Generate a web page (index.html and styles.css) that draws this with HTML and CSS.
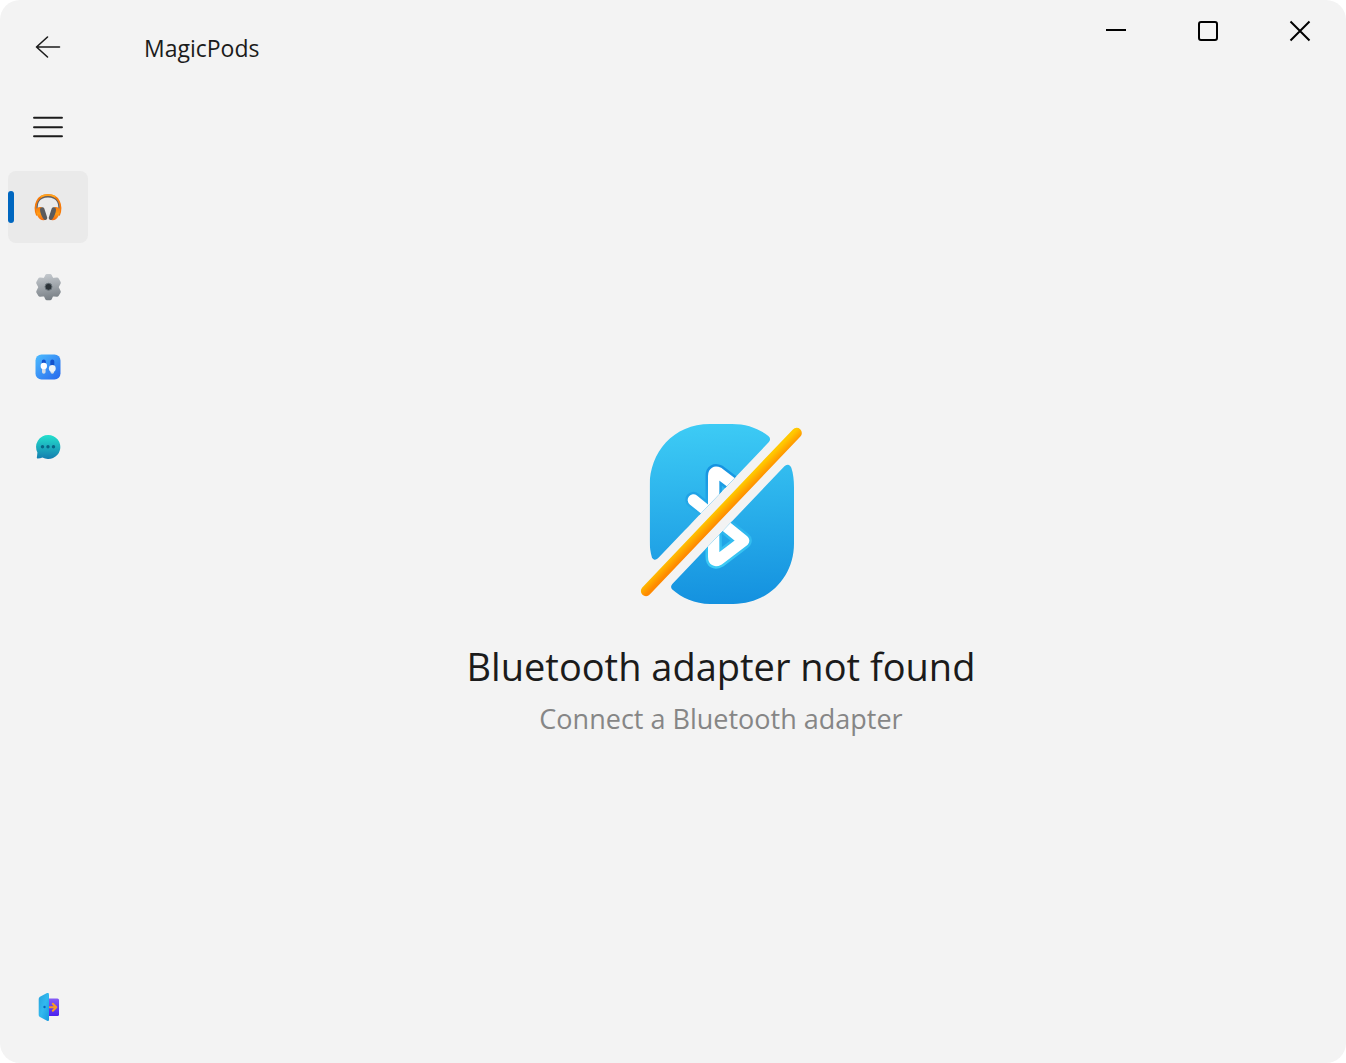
FILE: index.html
```html
<!DOCTYPE html>
<html lang="en">
<head>
<meta charset="utf-8">
<title>MagicPods</title>
<link rel="stylesheet" href="styles.css">
</head>
<body>
<div class="window">
  <nav class="sidebar" aria-label="Main">
    <button class="nav-button" type="button" aria-label="Back">
      <svg width="32" height="32" viewBox="0 0 32 32" fill="none" stroke="#1b1b1b" stroke-width="1.6" stroke-linecap="round" stroke-linejoin="round"><path d="M27.500 16H4.500M15.500 6L4.500 16L15.500 26"/></svg>
    </button>
    <button class="nav-button" type="button" aria-label="Menu">
      <svg width="32" height="32" viewBox="0 0 32 32" stroke="#1b1b1b" stroke-width="1.900" stroke-linecap="round"><path d="M2 6.700H30M2 16.200H30M2 25.200H30"/></svg>
    </button>
    <button class="nav-button selected" type="button" aria-label="Headphones" aria-current="page">
      <svg width="32" height="32" viewBox="0 0 32 32" fill="none">
        <defs><linearGradient id="cup" x1="0" y1="0" x2="0" y2="1"><stop stop-color="#f8790b"/><stop offset=".5" stop-color="#ff9c17"/><stop offset="1" stop-color="#f56a10"/></linearGradient></defs>
        <path d="M6.200 22C3 13.500 6 5.600 16 5.600S29 13.500 25.800 22" stroke="#606062" stroke-width="1.600"/>
        <path d="M5 24.500C1 14 5.500 4 16 4S31 14 27 24.500" stroke="#f77a08" stroke-width="1.800"/>
        <path d="M8.500 6C12 3.400 20 3.400 23.500 6" stroke="#ffa51f" stroke-width="1.600"/>
        <path d="M4.200 18.500C5.500 16 8 15.500 10 16.500L14.500 28.300C11 30.300 7.500 28.700 5.800 25.500C4.500 23 3.700 20.500 4.200 18.500ZM27.800 18.500C26.500 16 24 15.500 22 16.500L17.500 28.300C21 30.300 24.500 28.700 26.200 25.500C27.500 23 28.300 20.500 27.800 18.500Z" fill="url(#cup)"/>
        <path d="M8 18.500C8 15.800 11.500 15.600 12.300 17.500L15.200 26.500C15.600 28.600 12.800 29.800 11.500 28C9.800 25.500 8 21.500 8 18.500ZM24 18.500C24 15.800 20.500 15.600 19.700 17.500L16.800 26.500C16.400 28.600 19.200 29.800 20.500 28C22.200 25.500 24 21.500 24 18.500Z" fill="#5b5b5d"/>
      </svg>
    </button>
    <button class="nav-button" type="button" aria-label="Settings">
      <svg width="32" height="32" viewBox="0 0 32 32">
        <defs><linearGradient id="gear" gradientUnits="userSpaceOnUse" x1="14" y1="3" x2="18" y2="29"><stop stop-color="#c4c9ce"/><stop offset="1" stop-color="#777e84"/></linearGradient></defs>
        <path d="M15 5H18L19.800 9L25 8.600L26.800 11.700L24.500 16L26.800 20.800L25 23.800L19.800 23.200L18 27.300H15L13.200 23.200L8 23.800L6.200 20.800L8.500 16L6.200 11.700L8 8.600L13.200 9Z" fill="url(#gear)" stroke="url(#gear)" stroke-width="4" stroke-linejoin="round"/>
        <circle cx="16.500" cy="15.800" r="3.500" fill="#2b3237" stroke="#69737a"/>
      </svg>
    </button>
    <button class="nav-button" type="button" aria-label="Controls">
      <svg width="32" height="32" viewBox="0 0 32 32">
        <defs><linearGradient id="tile" x1="0" y1="0" x2="1" y2="1"><stop stop-color="#4cbcff"/><stop offset="1" stop-color="#2867ec"/></linearGradient></defs>
        <rect x="3.500" y="3.500" width="25" height="25" rx="6" fill="url(#tile)"/>
        <path d="M11.800 10.500V13M20.300 10.500V15" stroke="#1451cc" stroke-width="4" stroke-linecap="round"/>
        <path d="M11.800 15V21M20.300 17V21" stroke="#d5dce6" stroke-width="3.600" stroke-linecap="round"/>
        <circle cx="11.800" cy="15" r="3.200" fill="#fff"/><circle cx="20.300" cy="17.500" r="3.400" fill="#edf2f7"/>
      </svg>
    </button>
    <button class="nav-button" type="button" aria-label="Feedback">
      <svg width="32" height="32" viewBox="0 0 32 32">
        <defs><linearGradient id="chat" x1="0" y1="0" x2="0" y2="1"><stop stop-color="#24e0cd"/><stop offset="1" stop-color="#147daf"/></linearGradient></defs>
        <path d="M16.200 4A12 12 0 1 1 10.500 26.500Q8 27.700 5.400 27.600Q4.500 27.300 5 25.500L5.400 21.500A12 12 0 0 1 16.200 4Z" fill="url(#chat)"/>
        <g fill="#086585"><circle cx="10.500" cy="15.700" r="1.700"/><circle cx="16" cy="15.700" r="1.700"/><circle cx="21.500" cy="15.700" r="1.700"/></g>
      </svg>
    </button>
    <button class="nav-button exit" type="button" aria-label="Exit">
      <svg width="32" height="32" viewBox="0 0 32 32">
        <defs><linearGradient id="doorway" x1="0" y1="0" x2="0" y2="1"><stop stop-color="#865cf5"/><stop offset="1" stop-color="#4a20ee"/></linearGradient><linearGradient id="door" x1="0" y1="0" x2="1" y2="1"><stop stop-color="#25a2dc"/><stop offset=".5" stop-color="#32b9ef"/><stop offset="1" stop-color="#1698de"/></linearGradient></defs>
        <rect x="13" y="7.500" width="14" height="17.500" rx="1.500" fill="url(#doorway)"/>
        <path d="M17.500 16.300H24M20.800 12.800L24.300 16.300L20.800 19.800" fill="none" stroke="#f99a25" stroke-width="2" stroke-linecap="round" stroke-linejoin="round"/>
        <path d="M15 2.100Q17 1.400 17 3.400V28.700Q17 30.500 15 29.700L8 26.100Q6.700 25.400 6.700 24V8Q6.700 6.500 8 5.700Z" fill="url(#door)"/>
        <circle cx="12.500" cy="16" r="1.200" fill="#0965b9"/>
      </svg>
    </button>
  </nav>
  <header class="titlebar">
    <h1 class="app-name">MagicPods</h1>
    <div class="window-controls">
      <button class="control" type="button" aria-label="Minimize"><svg width="22" height="22" viewBox="0 0 22 22"><path d="M1 10H21" stroke="#000" stroke-width="2"/></svg></button>
      <button class="control" type="button" aria-label="Maximize"><svg width="22" height="22" viewBox="0 0 22 22"><rect x="2" y="2" width="18" height="18" rx="2" fill="none" stroke="#000" stroke-width="2"/></svg></button>
      <button class="control" type="button" aria-label="Close"><svg width="22" height="22" viewBox="0 0 22 22"><path d="M1.500 1.500L20.500 20.500M20.500 1.500L1.500 20.500" stroke="#000" stroke-width="2"/></svg></button>
    </div>
  </header>
  <main class="content">
    <svg class="illustration" width="162" height="180" viewBox="30 36 486 540" aria-hidden="true">
      <defs>
        <linearGradient id="badge" gradientUnits="userSpaceOnUse" x1="262" y1="36" x2="290" y2="576"><stop stop-color="#3dcbf5"/><stop offset="1" stop-color="#1491df"/></linearGradient>
        <linearGradient id="rim" gradientUnits="userSpaceOnUse" x1="270" y1="160" x2="270" y2="465"><stop stop-color="#1592e0"/><stop offset="1" stop-color="#3dcbf5"/></linearGradient>
        <linearGradient id="slash" gradientUnits="userSpaceOnUse" x1="263" y1="289" x2="285" y2="311"><stop stop-color="#ffc800"/><stop offset="1" stop-color="#ff8900"/></linearGradient>
        <clipPath id="halves">
          <path d="M240 36H306C350 36 388 50 415 72Q425 81 416 91L84 439Q73 448 66 437C61 420 59 405 59 385V222C59 120 130 36 240 36Z"/>
          <path d="M464 162Q478 153 484 167C490 185 492 205 492 225V395C492 495 415 576 310 576H240C195 576 155 558 126 532Q120 524 127 516Z"/>
        </clipPath>
      </defs>
      <g clip-path="url(#halves)">
        <path d="M30 36H516V576H30Z" fill="url(#badge)"/>
        <g fill="none" stroke-linecap="round" stroke-linejoin="round">
          <path d="M190 264L341 386L266 443Q251 451 251 434V192Q251 176 266 183L341 240L190 362" stroke="url(#rim)" stroke-width="49"/>
          <path d="M190 264L341 386L266 443Q251 451 251 434V192Q251 176 266 183L341 240L190 362" stroke="#fff" stroke-width="34"/>
        </g>
      </g>
      <path d="M48 537L500 63" stroke="url(#slash)" stroke-width="31" stroke-linecap="round"/>
    </svg>
    <h2 class="message">Bluetooth adapter not found</h2>
    <p class="hint">Connect a Bluetooth adapter</p>
  </main>
</div>
</body>
</html>
```
FILE: styles.css
```css
* {
  box-sizing: border-box;
}

body {
  margin: 0;
  background: #fff;
  color: #1b1b1b;
  font-family: "Segoe UI", "Open Sans", "Noto Sans", sans-serif;
}

.window {
  display: grid;
  grid-template: 96px 1fr / 96px 1fr;
  min-height: 100vh;
  border-radius: 20px;
  background: #f3f3f3;
}

.sidebar {
  grid-row: 1 / 3;
  display: flex;
  flex-direction: column;
  gap: 8px;
  padding: 11px 8px 20px;
}

.nav-button,
.control {
  display: flex;
  align-items: center;
  justify-content: center;
  padding: 0;
  border: 0;
  background: transparent;
}

.nav-button {
  position: relative;
  height: 72px;
  border-radius: 8px;
}

.nav-button.selected {
  background: #eaeaea;
}

.nav-button.selected::before {
  content: "";
  position: absolute;
  left: 0;
  top: 20px;
  width: 6px;
  height: 32px;
  border-radius: 3px;
  background: #0067c0;
}

.exit {
  margin-top: auto;
}

.titlebar {
  display: flex;
  align-items: flex-start;
  justify-content: space-between;
  padding-left: 48px;
}

.app-name {
  margin: 0;
  font-size: 23px;
  font-weight: 400;
  line-height: 96px;
}

.window-controls {
  display: flex;
}

.control {
  width: 92px;
  height: 62px;
}

.content {
  display: flex;
  flex-direction: column;
  align-items: center;
  justify-content: center;
  text-align: center;
}

.message {
  margin: 34px 0 8px;
  font-size: 38px;
  font-weight: 400;
  line-height: 56px;
}

.hint {
  margin: 0;
  color: #868686;
  font-size: 27px;
  line-height: 34px;
}
```
